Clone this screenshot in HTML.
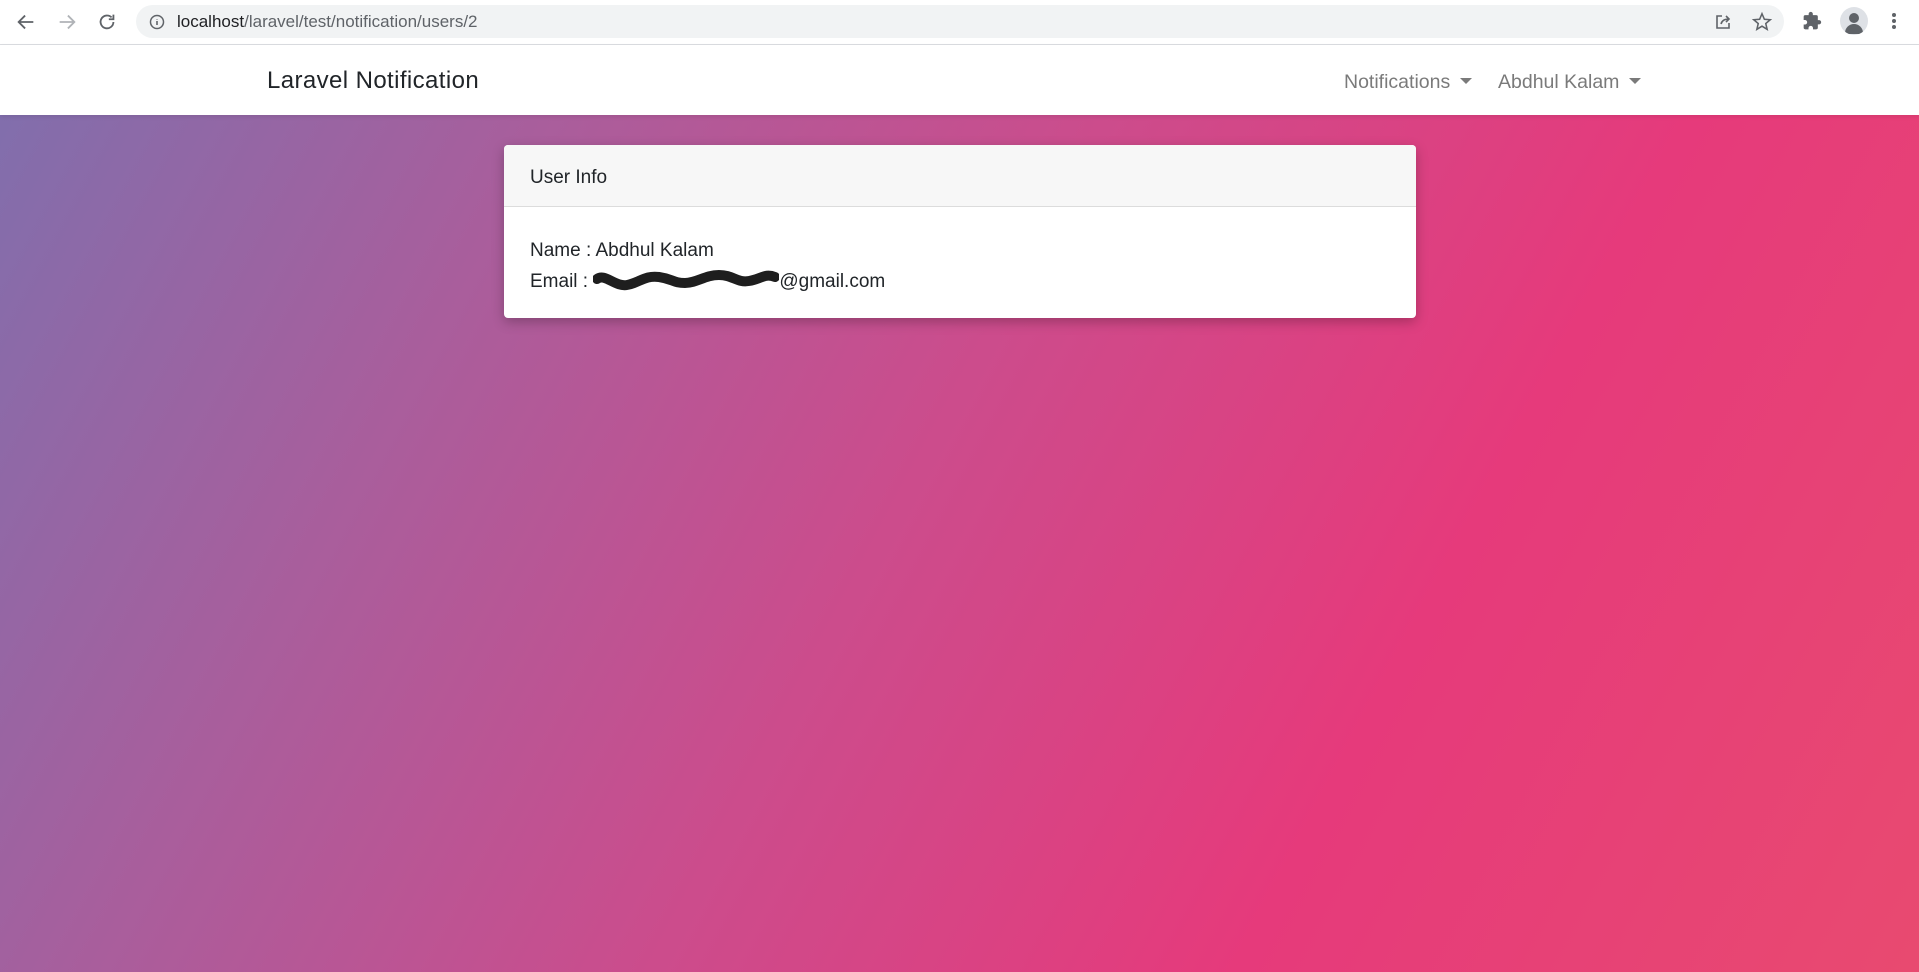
<!DOCTYPE html>
<html><head><meta charset="utf-8"><style>
*{margin:0;padding:0;box-sizing:border-box}
body{width:1919px;height:972px;overflow:hidden;font-family:"Liberation Sans",sans-serif;background:linear-gradient(118deg,#7d70ae 0%,#a95e9c 25%,#cc4c8c 48%,#e63a7b 72%,#e84a70 100%);position:relative}
.chrome{position:absolute;left:0;top:0;width:1919px;height:45px;background:#fff;border-bottom:1px solid #dadce0}
.url{position:absolute;left:136px;top:5px;width:1648px;height:33px;border-radius:17px;background:#f1f3f4}
.url span{position:absolute;left:41px;top:7px;font-size:17px;color:#202124}
.url span i{font-style:normal;color:#5f6368}
.nav{position:absolute;left:0;top:45px;width:1919px;height:70px;background:#fff;box-shadow:0 2px 4px rgba(0,0,0,.08)}
.brand{position:absolute;left:267px;top:22px;font-size:24px;letter-spacing:0.4px;color:#212529}
.link{position:absolute;top:26px;font-size:19.5px;color:#7a7a7a}
.caret{display:inline-block;width:0;height:0;border-left:6px solid transparent;border-right:6px solid transparent;border-top:6px solid #7a7a7a;vertical-align:middle;margin-left:10px;margin-top:-4px}
.card{position:absolute;left:504px;top:145px;width:912px;height:173px;background:#fff;border-radius:4px;box-shadow:0 4px 12px rgba(0,0,0,.25);overflow:hidden}
.card .hd{height:62px;background:#f7f7f7;border-bottom:1px solid #dcdcdc;padding:22px 26px 0;font-size:19px;color:#212529}
.card .bd{padding:28px 26px;font-size:19px;color:#212529;line-height:31px}
</style></head><body>
<div class="chrome">
<svg style="position:absolute;left:15px;top:11px" width="22" height="22" viewBox="0 0 24 24"><path d="M20 12H5M11 5l-7 7 7 7" stroke="#5f6368" stroke-width="2" fill="none"/></svg>
<svg style="position:absolute;left:56px;top:11px" width="22" height="22" viewBox="0 0 24 24"><path d="M4 12h15M13 5l7 7-7 7" stroke="#b0b3b7" stroke-width="2" fill="none"/></svg>
<svg style="position:absolute;left:96px;top:11px" width="22" height="22" viewBox="0 0 24 24"><path d="M19 12a7 7 0 1 1-2-5" stroke="#5f6368" stroke-width="2" fill="none"/><path d="M19 4v5h-5" stroke="#5f6368" stroke-width="2" fill="none"/></svg>
<div class="url">
<svg style="position:absolute;left:13px;top:9px" width="16" height="16" viewBox="0 0 16 16"><circle cx="8" cy="8" r="6.5" stroke="#5f6368" stroke-width="1.5" fill="none"/><path d="M8 7v4M8 5v.5" stroke="#5f6368" stroke-width="1.6"/></svg>
<span>localhost<i>/laravel/test/notification/users/2</i></span>
<svg style="position:absolute;left:1577px;top:7px" width="20" height="20" viewBox="0 0 20 20"><path d="M9 4H4v12h12v-5" stroke="#5f6368" stroke-width="1.6" fill="none"/><path d="M8 12c1-4 4-5 8-5M13 4l3 3-3 3" stroke="#5f6368" stroke-width="1.6" fill="none"/></svg>
<svg style="position:absolute;left:1615px;top:6px" width="22" height="22" viewBox="0 0 24 24"><path d="M12 3l2.6 6 6.4.5-4.9 4.2 1.5 6.3L12 16.6 6.4 20l1.5-6.3L3 9.5 9.4 9z" stroke="#5f6368" stroke-width="1.7" fill="none"/></svg>
</div>
<svg style="position:absolute;left:1802px;top:11px" width="20" height="20" viewBox="0 0 24 24"><path d="M20.5 11H19V7a2 2 0 0 0-2-2h-4V3.5a2.5 2.5 0 0 0-5 0V5H4a2 2 0 0 0-2 2v3.8h1.5a2.7 2.7 0 0 1 0 5.4H2V20a2 2 0 0 0 2 2h3.8v-1.5a2.7 2.7 0 0 1 5.4 0V22H17a2 2 0 0 0 2-2v-4h1.5a2.5 2.5 0 0 0 0-5z" fill="#5f6368"/></svg>
<div style="position:absolute;left:1840px;top:7px;width:28px;height:28px;border-radius:50%;background:#dee1e6;overflow:hidden"><div style="position:absolute;left:9px;top:6px;width:10px;height:10px;border-radius:50%;background:#5f6368"></div><div style="position:absolute;left:5px;top:17px;width:18px;height:10px;border-radius:9px 9px 0 0;background:#5f6368"></div></div>
<div style="position:absolute;left:1892px;top:13px;width:4px;height:4px;border-radius:2px;background:#5f6368;box-shadow:0 6px 0 #5f6368,0 12px 0 #5f6368"></div>
</div>
<div class="nav">
<div class="brand">Laravel Notification</div>
<div class="link" style="left:1344px">Notifications<span class="caret"></span></div>
<div class="link" style="left:1498px">Abdhul Kalam<span class="caret"></span></div>
</div>
<div class="card">
<div class="hd">User Info</div>
<div class="bd">Name : Abdhul Kalam<br>Email : <span style="display:inline-block;width:186px;height:14px;vertical-align:middle;position:relative"><svg width="186" height="24" style="position:absolute;top:-6px;left:0" viewBox="0 0 186 24"><path d="M4 10c8-6 18 8 30 6s18-10 32-8 14 6 26 6 20-8 34-8 18 8 30 6 16-8 26-4" stroke="#1e1e1e" stroke-width="10" fill="none" stroke-linecap="round"/></svg></span>@gmail.com</div>
</div>
</body></html>
